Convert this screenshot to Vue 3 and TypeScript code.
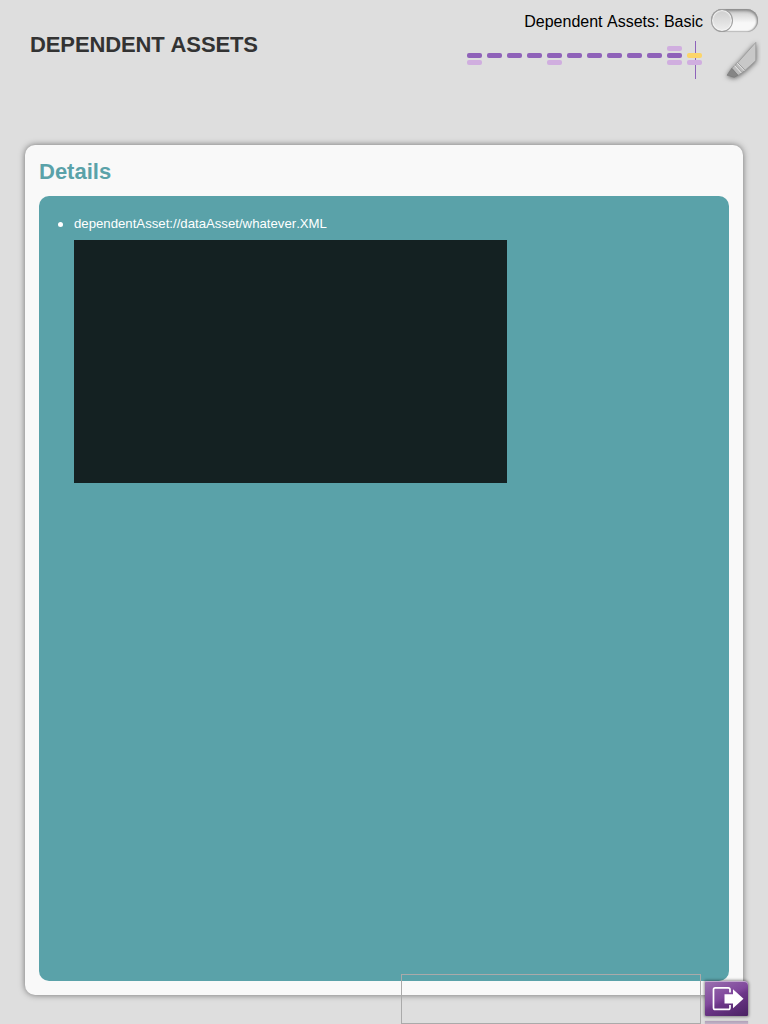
<script setup lang="ts">
interface Column {
  above: boolean
  below: boolean
  current: boolean
}

const columns: Column[] = Array.from({ length: 12 }, (_, i) => ({
  above: i === 10,
  below: [0, 4, 10, 11].includes(i),
  current: i === 11,
}))
const assets: string[] = ['dependentAsset://dataAsset/whatever.XML']
</script>

<template>
  <div class="page">
    <header class="header">
      <h1 class="title">DEPENDENT ASSETS</h1>
      <div class="tools">
        <div class="mode">
          <span class="mode-label">Dependent Assets: Basic</span>
          <div class="switch"><span class="knob"></span></div>
        </div>
        <div class="nav">
          <div class="map">
            <div v-for="(c, i) in columns" :key="i" class="col" :class="{ current: c.current }">
              <span class="dash light" :class="{ empty: !c.above }"></span>
              <span class="dash main"></span>
              <span class="dash light" :class="{ empty: !c.below }"></span>
            </div>
          </div>
          <svg class="marker" width="44" height="50" viewBox="0 0 44 50">
            <g class="marker-shape">
              <path d="M38.8 8.4 V26.6 L28 36.4 L20.6 28.8 Z" fill="#c8c8c8" stroke="#999" stroke-width=".8" />
              <path d="M20.6 28.8 L28 36.4 L21 41.4 L14.8 34.3 Z" fill="#bcbcbc" stroke="#929292" stroke-width=".7" />
              <path d="M20.2 29.2 L27.3 36.7 M17.6 31.7 L24.3 39" fill="none" stroke="#e9e9e9" stroke-width="1" />
              <path d="M18.3 31 L25.2 38.3" fill="none" stroke="#999" stroke-width=".5" />
              <path d="M14.8 34.3 L21 41.2 L17.3 43.3 L10 41.2 Z" fill="#858585" stroke="#777" stroke-width=".6" />
            </g>
          </svg>
        </div>
      </div>
    </header>

    <main class="card">
      <h2 class="heading">Details</h2>
      <section class="panel">
        <ul class="list">
          <li v-for="a in assets" :key="a" class="item">
            <span class="asset">{{ a }}</span>
            <div class="media"></div>
          </li>
        </ul>
      </section>
    </main>

    <div class="outline"></div>
    <div class="exit">
      <div class="exit-button">
        <svg width="43" height="35" viewBox="0 0 43 35">
          <path d="M25 11.5 V8.5 Q25 6.8 23.3 6.8 H10.2 Q8.5 6.8 8.5 8.5 V26.7 Q8.5 28.4 10.2 28.4 H23.3 Q25 28.4 25 26.7 V24" fill="none" stroke="#fff" stroke-width="1.7" />
          <path d="M19.5 13.2 H28 V8.3 L38.5 17.8 L28 27.3 V22.4 H19.5 Z" fill="#fff" />
        </svg>
      </div>
      <div class="reflection"></div>
    </div>
  </div>
</template>

<style>
html, body {
  margin: 0;
  overflow: hidden;
  background: #dedede;
}
</style>

<style scoped>
.page {
  position: relative;
  box-sizing: border-box;
  width: 768px;
  height: 1024px;
  overflow: hidden;
  background: #dedede;
  font-family: "Liberation Sans", Arial, sans-serif;
}
.header {
  display: flex;
  justify-content: space-between;
  height: 145px;
}
.title {
  margin: 32px 0 0 30px;
  font-size: 22px;
  line-height: 25px;
  letter-spacing: -.12px;
  font-kerning: none;
  color: #333;
  height: 25px;
}
.tools {
  width: 301px;
  padding-top: 9px;
}
.mode {
  display: flex;
  justify-content: flex-end;
  gap: 8px;
  padding-right: 10px;
}
.mode-label {
  font-size: 16px;
  line-height: 25px;
  font-kerning: none;
  color: #000;
}
.switch {
  box-sizing: border-box;
  width: 47px;
  height: 23px;
  border-radius: 12px;
  background: linear-gradient(#c6c6c6, #e4e4e4 35%, #f8f8f8 60%, #f8f8f8);
  box-shadow: inset 0 2px 3px #8a8a8a, inset -1px 0 2px #909090, inset 0 -1px 1px #d0d0d0, 0 0 1px #bbb;
}
.knob {
  display: block;
  box-sizing: border-box;
  width: 22px;
  height: 23px;
  border: 1px solid #9d9d9d;
  border-radius: 50%;
  background: linear-gradient(#cecece, #eee);
  box-shadow: inset 0 0 1px 1px #f5f5f5;
}
.nav {
  display: flex;
  gap: 15px;
}
.map {
  display: flex;
  gap: 5px;
  width: 235px;
  height: 38px;
  padding-top: 7px;
}
.col {
  position: relative;
  display: flex;
  flex-direction: column;
  gap: 2px;
  width: 15px;
  padding-top: 5px;
}
.current::before {
  content: "";
  position: absolute;
  left: 8px;
  top: 0;
  width: 1px;
  height: 38px;
  background: #8e63ba;
}
.dash {
  position: relative;
  width: 15px;
  height: 5px;
  border-radius: 2px;
}
.main {
  background: #8f62b9;
}
.light {
  background: #d0aedf;
}
.empty {
  visibility: hidden;
}
.current .main {
  background: #fcd569;
}
.marker {
  flex: none;
}
.marker-shape {
  filter: drop-shadow(0 1px 2.5px rgba(0, 0, 0, .55));
}
.card {
  box-sizing: border-box;
  width: 718px;
  height: 850px;
  margin: 0 25px;
  padding: 14px;
  border-radius: 10px;
  background: #f9f9f9;
  box-shadow: 0 0 6px rgba(0, 0, 0, .5);
}
.heading {
  margin: 0 0 12px;
  font-size: 22px;
  line-height: 25px;
  font-kerning: none;
  color: #5aa2a9;
}
.panel {
  box-sizing: border-box;
  height: 785px;
  padding-top: 20px;
  border-radius: 10px;
  background: #5aa2a9;
}
.list {
  margin: 0;
  padding-left: 35px;
  list-style: none;
}
.item {
  display: flex;
  flex-direction: column;
  gap: 8px;
}
.asset {
  display: flex;
  align-items: center;
  gap: 11px;
  margin-left: -16px;
  font-size: 13.2px;
  line-height: 16px;
  height: 16px;
  font-kerning: none;
  color: #fff;
}
.asset::before {
  content: "";
  width: 5px;
  height: 5px;
  border-radius: 50%;
  background: #fff;
}
.media {
  width: 433px;
  height: 243px;
  background: #142122;
}
.outline {
  position: absolute;
  left: 401px;
  top: 974px;
  box-sizing: border-box;
  width: 300px;
  height: 50px;
  border: 1px solid #aaa;
}
.exit {
  position: absolute;
  left: 705px;
  top: 981px;
  display: flex;
  flex-direction: column;
  gap: 5px;
}
.exit-button {
  width: 43px;
  height: 35px;
  border-radius: 1px 4px 1px 1px;
  background: linear-gradient(155deg, #9b72b0 0%, #80489c 45%, #6c3688 55%, #4a2263 100%);
  box-shadow: inset 0 1px 0 #c3a8cf, 0 0 3px 1px rgba(0, 0, 0, .4);
}
.exit-button svg {
  display: block;
}
.reflection {
  width: 43px;
  height: 3px;
  background: linear-gradient(#b0a0b8, #c2b6c8);
  box-shadow: 0 0 2px #bbb;
}
</style>
